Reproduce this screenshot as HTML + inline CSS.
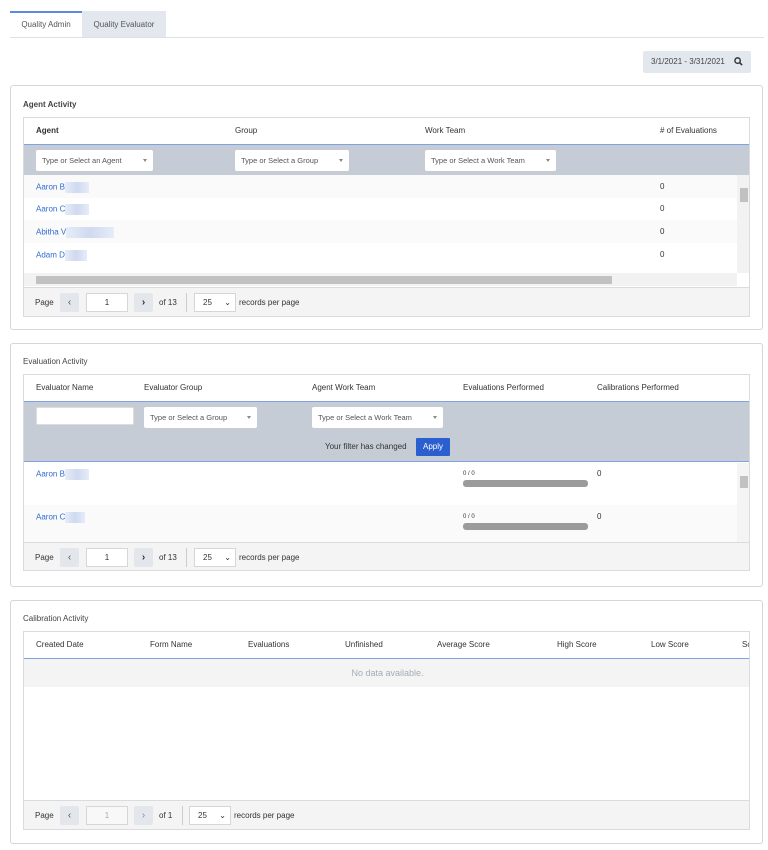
<!DOCTYPE html>
<html><head><style>
*{box-sizing:border-box;margin:0;padding:0}
body{width:768px;height:850px;background:#fff;font-family:"Liberation Sans",sans-serif;font-size:8px;color:#333;position:relative;overflow:hidden}
.a{position:absolute}
.panel{position:absolute;left:10px;width:753px;border:1px solid #d4d6da;border-radius:3px;background:#fff}
.tbl{position:absolute;left:23px;width:727px;border:1px solid #d9dbdf;overflow:hidden;background:#fff}
.hd{position:absolute;left:0;right:0;top:0;background:#fff}
.filt{position:absolute;left:0;right:0;background:#c6ccd5;border-top:1px solid #7fa2e0;border-bottom:1px solid #7fa2e0}
.sel{position:absolute;height:21px;background:#fff;border-radius:2px;padding:6px 6px;color:#555;font-size:7.5px;white-space:nowrap}
.sel:after{content:"";position:absolute;right:6px;top:9px;border:2.5px solid transparent;border-top:3px solid #888}
.pager{position:absolute;left:0;right:0;bottom:0;height:29px;background:#f4f4f4;border-top:1px solid #d9dbdf}
.pb{position:absolute;top:5px;width:19px;height:19px;background:#e3e6eb;border-radius:2px;text-align:center;line-height:19px;font-size:10px;color:#555}
.pi{position:absolute;top:5px;width:42px;height:19px;background:#fff;border:1px solid #d6d6d6;text-align:center;line-height:17px}
.lnk{color:#2e6bd1}
.blur{display:inline-block;height:11px;vertical-align:middle;background:linear-gradient(90deg,#e6ecf8,#cfd9f0,#e6ecf8)}
.t{position:absolute;white-space:nowrap}
</style></head><body>
<div class="a" style="left:10px;top:11px;width:72px;height:27px;border-top:2px solid #5a8be0;background:#fff;text-align:center;line-height:24px;color:#555">Quality Admin</div>
<div class="a" style="left:82px;top:11px;width:84px;height:27px;background:#e3e7ee;text-align:center;line-height:27px;color:#555">Quality Evaluator</div>
<div class="a" style="left:10px;top:37px;width:754px;height:1px;background:#dde1e7"></div>
<div class="a" style="left:643px;top:51px;width:108px;height:22px;background:#e3e7ee;border-radius:2px;line-height:22px;color:#444;padding-left:8px">3/1/2021 - 3/31/2021
<svg style="position:absolute;right:8px;top:6px" width="9" height="9" viewBox="0 0 10 10"><circle cx="4" cy="4" r="3" fill="none" stroke="#333" stroke-width="1.6"/><path d="M6.2 6.2L9 9" stroke="#333" stroke-width="1.8"/></svg></div>

<div class="panel" style="top:85px;height:245px"></div>
<div class="t" style="left:23px;top:100px;font-weight:bold;color:#444">Agent Activity</div>
<div class="tbl" style="top:117px;height:200px">
 <div class="hd" style="height:27px">
  <span class="t" style="left:12px;top:8px;font-weight:bold">Agent</span>
  <span class="t" style="left:211px;top:8px">Group</span>
  <span class="t" style="left:401px;top:8px">Work Team</span>
  <span class="t" style="left:636px;top:8px">#  of Evaluations</span>
 </div>
 <div class="filt" style="top:26px;height:31px;border-bottom:none">
  <div class="sel" style="left:12px;top:5px;width:117px">Type or Select an Agent</div>
  <div class="sel" style="left:211px;top:5px;width:114px">Type or Select a Group</div>
  <div class="sel" style="left:401px;top:5px;width:131px">Type or Select a Work Team</div>
 </div>
 <div class="a" style="left:0;top:57px;width:713px;height:23px;background:#fafafa"></div>
 <div class="a" style="left:0;top:102px;width:713px;height:23px;background:#fafafa"></div>
 <span class="t lnk" style="left:12px;top:64px">Aaron B<span class="blur" style="width:24px"></span></span>
 <span class="t lnk" style="left:12px;top:86px">Aaron C<span class="blur" style="width:24px"></span></span>
 <span class="t lnk" style="left:12px;top:109px">Abitha V<span class="blur" style="width:48px"></span></span>
 <span class="t lnk" style="left:12px;top:132px">Adam D<span class="blur" style="width:22px"></span></span>
 <span class="t" style="left:636px;top:64px">0</span><span class="t" style="left:636px;top:86px">0</span><span class="t" style="left:636px;top:109px">0</span><span class="t" style="left:636px;top:132px">0</span>
 <div class="a" style="left:713px;top:57px;width:13px;height:98px;background:#f2f2f2"></div>
 <div class="a" style="left:716px;top:70px;width:8px;height:14px;background:#c1c1c1"></div>
 <div class="a" style="left:0;top:155px;width:713px;height:13px;background:#f2f2f2"></div>
 <div class="a" style="left:12px;top:158px;width:576px;height:8px;background:#c1c1c1"></div>
 <div class="pager">
  <span class="t" style="left:11px;top:10px">Page</span>
  <div class="pb" style="left:36px">&#8249;</div>
  <div class="pi" style="left:62px">1</div>
  <div class="pb" style="left:110px;font-weight:bold;color:#333">&#8250;</div>
  <span class="t" style="left:135px;top:10px">of 13</span>
  <div class="a" style="left:162px;top:5px;width:1px;height:19px;background:#ccc"></div>
  <div class="pi" style="left:170px;width:42px;text-align:left;padding-left:8px">25 <span style="float:right;padding-right:4px">&#8964;</span></div>
  <span class="t" style="left:215px;top:10px">records per page</span>
 </div>
</div>

<div class="panel" style="top:343px;height:244px"></div>
<div class="t" style="left:23px;top:357px;color:#444">Evaluation Activity</div>
<div class="tbl" style="top:374px;height:197px">
 <div class="hd" style="height:27px">
  <span class="t" style="left:12px;top:8px">Evaluator Name</span>
  <span class="t" style="left:120px;top:8px">Evaluator Group</span>
  <span class="t" style="left:288px;top:8px">Agent Work Team</span>
  <span class="t" style="left:439px;top:8px">Evaluations Performed</span>
  <span class="t" style="left:573px;top:8px">Calibrations Performed</span>
 </div>
 <div class="filt" style="top:26px;height:61px">
  <div class="a" style="left:12px;top:5px;width:98px;height:18px;background:#fff;border:1px solid #ddd;border-radius:2px"></div>
  <div class="sel" style="left:120px;top:5px;width:113px">Type or Select a Group</div>
  <div class="sel" style="left:288px;top:5px;width:131px">Type or Select a Work Team</div>
  <span class="t" style="left:301px;top:40px">Your filter has changed</span>
  <div class="a" style="left:392px;top:36px;width:34px;height:18px;background:#2b5fcf;color:#fff;text-align:center;line-height:18px;border-radius:1px">Apply</div>
 </div>
 <div class="a" style="left:0;top:130px;width:713px;height:39px;background:#fafafa"></div>
 <span class="t lnk" style="left:12px;top:94px">Aaron B<span class="blur" style="width:24px"></span></span>
 <span class="t lnk" style="left:12px;top:137px">Aaron C<span class="blur" style="width:20px"></span></span>
 <span class="t" style="left:439px;top:96px;font-size:6px">0 / 0</span>
 <div class="a" style="left:439px;top:105px;width:125px;height:7px;background:#9b9b9b;border-radius:3px"></div>
 <span class="t" style="left:439px;top:139px;font-size:6px">0 / 0</span>
 <div class="a" style="left:439px;top:148px;width:125px;height:7px;background:#9b9b9b;border-radius:3px"></div>
 <span class="t" style="left:573px;top:94px">0</span><span class="t" style="left:573px;top:137px">0</span>
 <div class="a" style="left:713px;top:88px;width:13px;height:80px;background:#f4f4f4"></div>
 <div class="a" style="left:716px;top:101px;width:8px;height:12px;background:#c1c1c1"></div>
 <div class="pager" style="height:28px">
  <span class="t" style="left:11px;top:10px">Page</span>
  <div class="pb" style="left:36px">&#8249;</div>
  <div class="pi" style="left:62px">1</div>
  <div class="pb" style="left:110px;font-weight:bold;color:#333">&#8250;</div>
  <span class="t" style="left:135px;top:10px">of 13</span>
  <div class="a" style="left:162px;top:5px;width:1px;height:19px;background:#ccc"></div>
  <div class="pi" style="left:170px;width:42px;text-align:left;padding-left:8px">25 <span style="float:right;padding-right:4px">&#8964;</span></div>
  <span class="t" style="left:215px;top:10px">records per page</span>
 </div>
</div>

<div class="panel" style="top:600px;height:244px"></div>
<div class="t" style="left:23px;top:614px;color:#444">Calibration Activity</div>
<div class="tbl" style="top:631px;height:199px">
 <div class="hd" style="height:27px;border-bottom:1px solid #7fa2e0">
  <span class="t" style="left:12px;top:8px">Created Date</span>
  <span class="t" style="left:126px;top:8px">Form Name</span>
  <span class="t" style="left:224px;top:8px">Evaluations</span>
  <span class="t" style="left:321px;top:8px">Unfinished</span>
  <span class="t" style="left:413px;top:8px">Average Score</span>
  <span class="t" style="left:533px;top:8px">High Score</span>
  <span class="t" style="left:627px;top:8px">Low Score</span>
  <span class="t" style="left:718px;top:8px">Sc</span>
 </div>
 <div class="a" style="left:0;top:27px;width:727px;height:28px;background:#f4f4f4;text-align:center;line-height:28px;color:#a5acb8;font-size:9px">No data available.</div>
 <div class="pager">
  <span class="t" style="left:11px;top:10px">Page</span>
  <div class="pb" style="left:36px">&#8249;</div>
  <div class="pi" style="left:62px;background:#f8f8f8;color:#aaa">1</div>
  <div class="pb" style="left:110px;color:#888">&#8250;</div>
  <span class="t" style="left:135px;top:10px">of 1</span>
  <div class="a" style="left:158px;top:5px;width:1px;height:19px;background:#ccc"></div>
  <div class="pi" style="left:165px;width:42px;text-align:left;padding-left:8px">25 <span style="float:right;padding-right:4px">&#8964;</span></div>
  <span class="t" style="left:210px;top:10px">records per page</span>
 </div>
</div>
</body></html>
